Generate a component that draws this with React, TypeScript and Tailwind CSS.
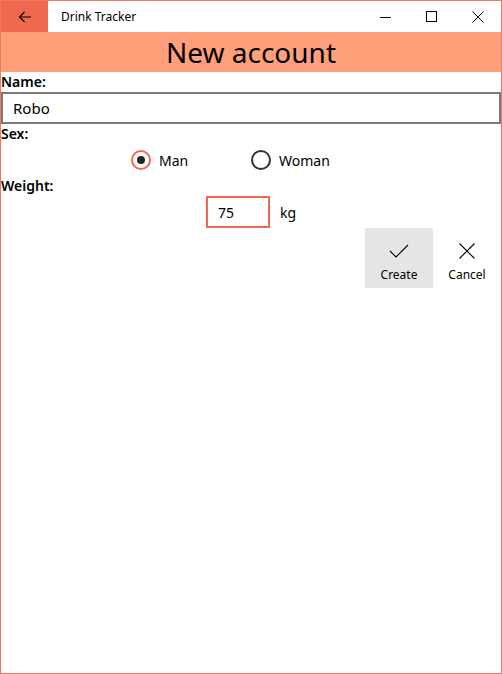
import { useState } from "react";

const font = { fontFamily: '"Noto Sans", "Open Sans", sans-serif' };

const BackArrow = () => (
	<svg width="16" height="16" viewBox="0 0 16 16" fill="none" stroke="#000" strokeWidth="1.1">
		<path d="M14 8H2.5M7.5 3L2.5 8l5 5" />
	</svg>
);

const App = () => {
	const [sex, setSex] = useState<"man" | "woman">("man");
	const [name, setName] = useState("Robo");
	const [weight, setWeight] = useState("75");

	return (
		<div
			className="w-[502px] h-[674px] border border-[#ef7a62] bg-white flex flex-col text-black"
			style={font}
		>
			{/* title bar */}
			<div className="h-[31px] flex items-center bg-white">
				<div className="w-[47px] h-full bg-[#ef6950] flex items-center justify-center">
					<BackArrow />
				</div>
				<span className="ml-[13px] text-[12px] flex-1">Drink Tracker</span>
				<div className="flex h-full">
					<div className="w-[46px] h-full flex items-center justify-center">
						<svg width="12" height="12" viewBox="0 0 12 12" stroke="#000" strokeWidth="1">
							<path d="M0 6.5h11" />
						</svg>
					</div>
					<div className="w-[46px] h-full flex items-center justify-center">
						<svg width="12" height="12" viewBox="0 0 12 12" fill="none" stroke="#000" strokeWidth="1">
							<rect x="0.5" y="0.5" width="10" height="10" />
						</svg>
					</div>
					<div className="w-[46px] h-full flex items-center justify-center">
						<svg width="12" height="12" viewBox="0 0 12 12" stroke="#000" strokeWidth="1">
							<path d="M0.5 0.5l11 11M11.5 0.5l-11 11" />
						</svg>
					</div>
				</div>
			</div>

			{/* header */}
			<div className="h-[40px] bg-[#ffa07a] flex items-center justify-center">
				<h1 className="text-[28px] leading-none">New account</h1>
			</div>

			<div className="flex flex-col">
				<label className="text-[14px] font-semibold leading-[20px]">Name:</label>
				<input
					value={name}
					onChange={(e) => setName(e.target.value)}
					className="h-[32px] border-2 border-[#7a7a7a] px-[10px] text-[15px] outline-none"
				/>
				<label className="text-[14px] font-semibold leading-[20px]">Sex:</label>
				<div className="flex justify-center h-[32px] items-center">
					{(["man", "woman"] as const).map((s) => (
						<button
							key={s}
							onClick={() => setSex(s)}
							className="w-[120px] flex items-center gap-[8px]"
						>
							<span
								className={
									sex === s
										? "w-[20px] h-[20px] rounded-full border-2 border-[#ef6950] flex items-center justify-center"
										: "w-[20px] h-[20px] rounded-full border-2 border-[#333333] flex items-center justify-center"
								}
							>
								{sex === s && <span className="w-[8px] h-[8px] rounded-full bg-[#222]" />}
							</span>
							<span className="text-[14px]">{s === "man" ? "Man" : "Woman"}</span>
						</button>
					))}
				</div>
				<label className="text-[14px] font-semibold leading-[20px]">Weight:</label>
				<div className="flex justify-center items-center gap-[10px]">
					<input
						value={weight}
						onChange={(e) => setWeight(e.target.value)}
						className="w-[64px] h-[32px] border-2 border-[#ef6950] px-[10px] text-[14px] outline-none"
					/>
					<span className="text-[14px] w-[16px]">kg</span>
				</div>
				<div className="flex justify-end">
					<button className="w-[68px] h-[60px] bg-[#e6e6e6] flex flex-col items-center pt-[15px]">
						<svg width="20" height="16" viewBox="0 0 20 16" fill="none" stroke="#000" strokeWidth="1.1">
							<path d="M1 8l6 6L19 2" />
						</svg>
						<span className="text-[12px] mt-[7px]">Create</span>
					</button>
					<button className="w-[68px] h-[60px] flex flex-col items-center pt-[15px]">
						<svg width="18" height="16" viewBox="0 0 18 16" fill="none" stroke="#000" strokeWidth="1.1">
							<path d="M1.5 0.5l15 15M16.5 0.5l-15 15" />
						</svg>
						<span className="text-[12px] mt-[7px]">Cancel</span>
					</button>
				</div>
			</div>
		</div>
	);
};

export default App;
